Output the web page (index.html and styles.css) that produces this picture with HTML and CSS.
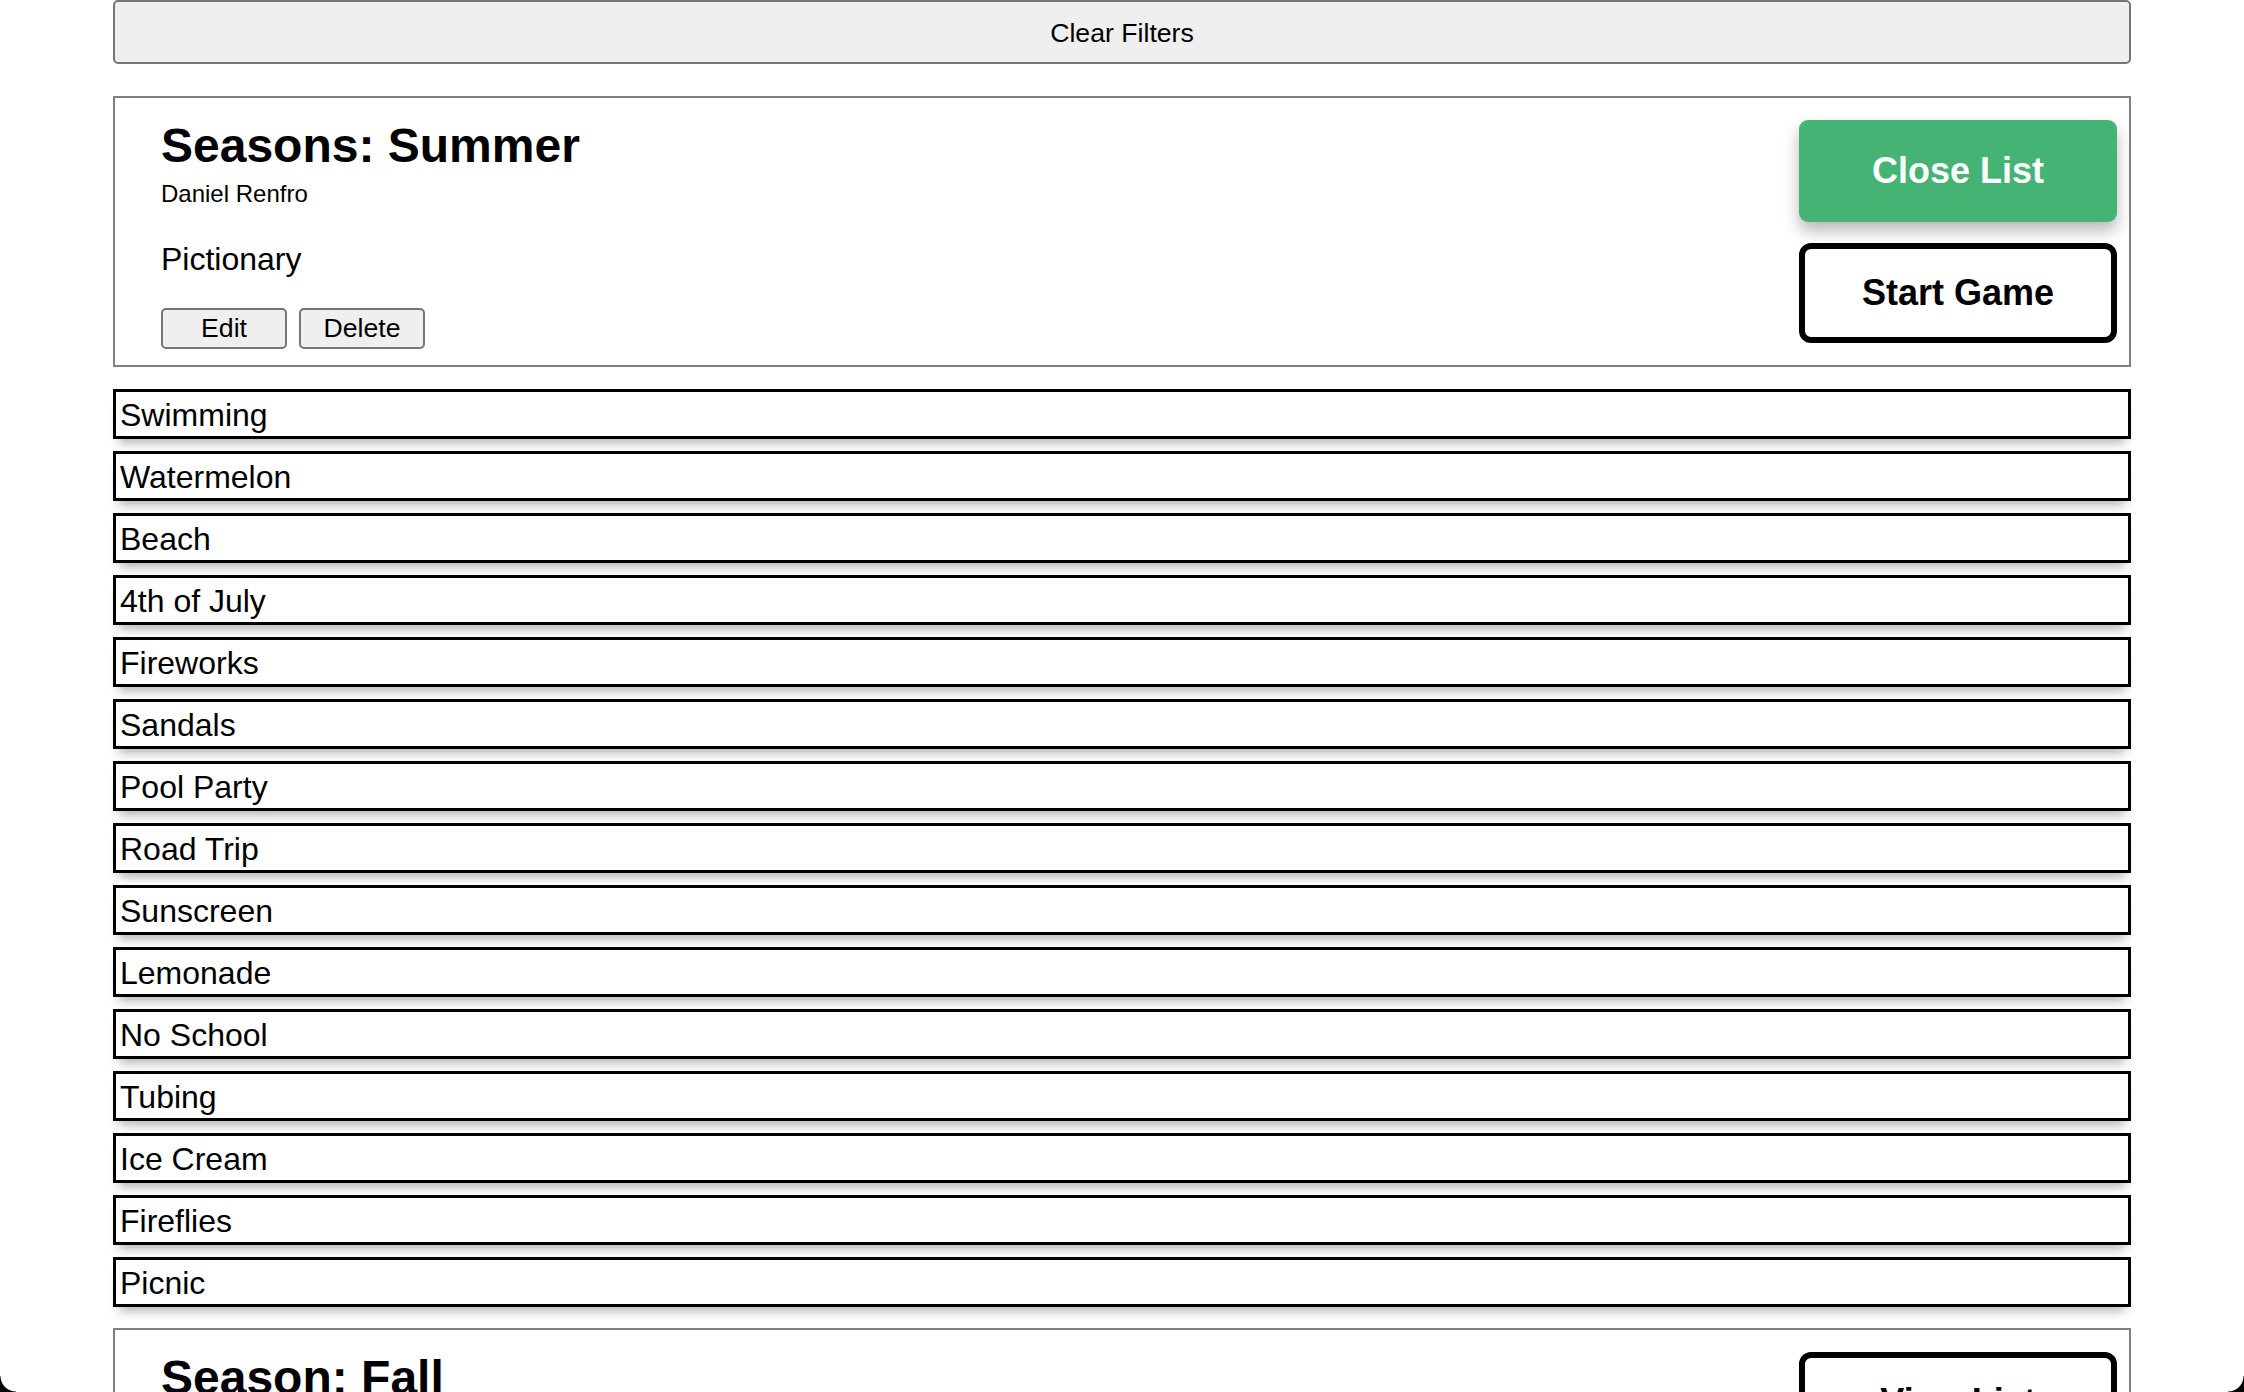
FILE: index.html
```html
<!DOCTYPE html>
<html lang="en">
<head>
<meta charset="utf-8">
<title>Lists</title>
<link rel="stylesheet" href="styles.css">
</head>
<body>
<div class="page">
  <button class="clear-btn">Clear Filters</button>

  <section class="card">
    <div class="card-info">
      <h2 class="card-title">Seasons: Summer</h2>
      <p class="card-author">Daniel Renfro</p>
      <p class="card-category">Pictionary</p>
      <div class="card-actions">
        <button class="small-btn">Edit</button>
        <button class="small-btn">Delete</button>
      </div>
    </div>
    <div class="card-buttons">
      <button class="btn btn-green">Close List</button>
      <button class="btn btn-outline">Start Game</button>
    </div>
  </section>

  <ul class="word-list">
    <li class="word">Swimming</li>
    <li class="word">Watermelon</li>
    <li class="word">Beach</li>
    <li class="word">4th of July</li>
    <li class="word">Fireworks</li>
    <li class="word">Sandals</li>
    <li class="word">Pool Party</li>
    <li class="word">Road Trip</li>
    <li class="word">Sunscreen</li>
    <li class="word">Lemonade</li>
    <li class="word">No School</li>
    <li class="word">Tubing</li>
    <li class="word">Ice Cream</li>
    <li class="word">Fireflies</li>
    <li class="word">Picnic</li>
  </ul>

  <section class="card">
    <div class="card-info">
      <h2 class="card-title">Season: Fall</h2>
      <p class="card-author">Daniel Renfro</p>
      <p class="card-category">Pictionary</p>
      <div class="card-actions">
        <button class="small-btn">Edit</button>
        <button class="small-btn">Delete</button>
      </div>
    </div>
    <div class="card-buttons">
      <button class="btn btn-outline">View List</button>
      <button class="btn btn-outline">Start Game</button>
    </div>
  </section>
</div>
<div class="corner corner-left"></div>
<div class="corner corner-right"></div>
</body>
</html>
```

FILE: styles.css
```css
html, body {
  margin: 0;
  padding: 0;
  background: #ffffff;
}

body {
  font-family: "Liberation Sans", Arial, sans-serif;
  color: #000;
  overflow: hidden;
}

.page {
  width: 2018px;
  margin: 0 auto;
  display: flex;
  flex-direction: column;
}

.clear-btn {
  display: block;
  width: 100%;
  height: 64px;
  margin: 0;
  font-family: "Liberation Sans", Arial, sans-serif;
  font-size: 26.67px;
  color: #000;
  background: #efefef;
  border: 2px solid #767676;
  border-radius: 5px;
  padding: 2px 0 0;
}

.card {
  margin-top: 32px;
  border: 2px solid #808080;
  display: flex;
  justify-content: space-between;
  align-items: flex-start;
  padding: 20px 12px 16px 46px;
  background: #fff;
}

.card-info {
  display: flex;
  flex-direction: column;
}

.card-title {
  margin: 0;
  font-size: 48px;
  line-height: 55px;
  font-weight: bold;
}

.card-author {
  margin: 7px 0 0;
  font-size: 24px;
  line-height: 28px;
}

.card-category {
  margin: 33px 0 0;
  font-size: 32px;
  line-height: 37px;
}

.card-actions {
  margin-top: 30px;
  display: flex;
  gap: 12px;
}

.small-btn {
  width: 126px;
  height: 41px;
  padding: 0;
  font-family: "Liberation Sans", Arial, sans-serif;
  font-size: 26.67px;
  color: #000;
  background: #efefef;
  border: 2px solid #767676;
  border-radius: 5px;
}

.card-buttons {
  padding: 2px 0 4px;
  display: flex;
  flex-direction: column;
  gap: 21px;
}

.btn {
  width: 318px;
  font-family: "Liberation Sans", Arial, sans-serif;
  font-size: 36px;
  font-weight: bold;
  padding: 0;
  cursor: pointer;
}

.btn-green {
  height: 102px;
  background: #44b373;
  color: #fff;
  border: none;
  border-radius: 9px;
  box-shadow: 0 9px 16px rgba(0, 0, 0, 0.28);
}

.btn-outline {
  height: 100px;
  background: #fff;
  color: #000;
  border: 6px solid #000;
  border-radius: 12px;
}

.word-list {
  list-style: none;
  margin: 22px 0 0;
  padding: 0;
  display: flex;
  flex-direction: column;
  gap: 12px;
}

.word {
  border: 3px solid #000;
  padding: 5px 4px 3px;
  font-size: 32px;
  line-height: 36px;
  background: #fff;
  box-shadow: 0 10px 10px -6px rgba(0, 0, 0, 0.3);
}

.word-list + .card {
  margin-top: 21px;
}

.corner {
  position: fixed;
  bottom: 0;
  width: 16px;
  height: 16px;
}

.corner-left {
  left: 0;
  background: radial-gradient(circle at 100% 0, transparent 15px, #000 16px);
}

.corner-right {
  right: 0;
  background: radial-gradient(circle at 0 0, transparent 15px, #000 16px);
}
```
